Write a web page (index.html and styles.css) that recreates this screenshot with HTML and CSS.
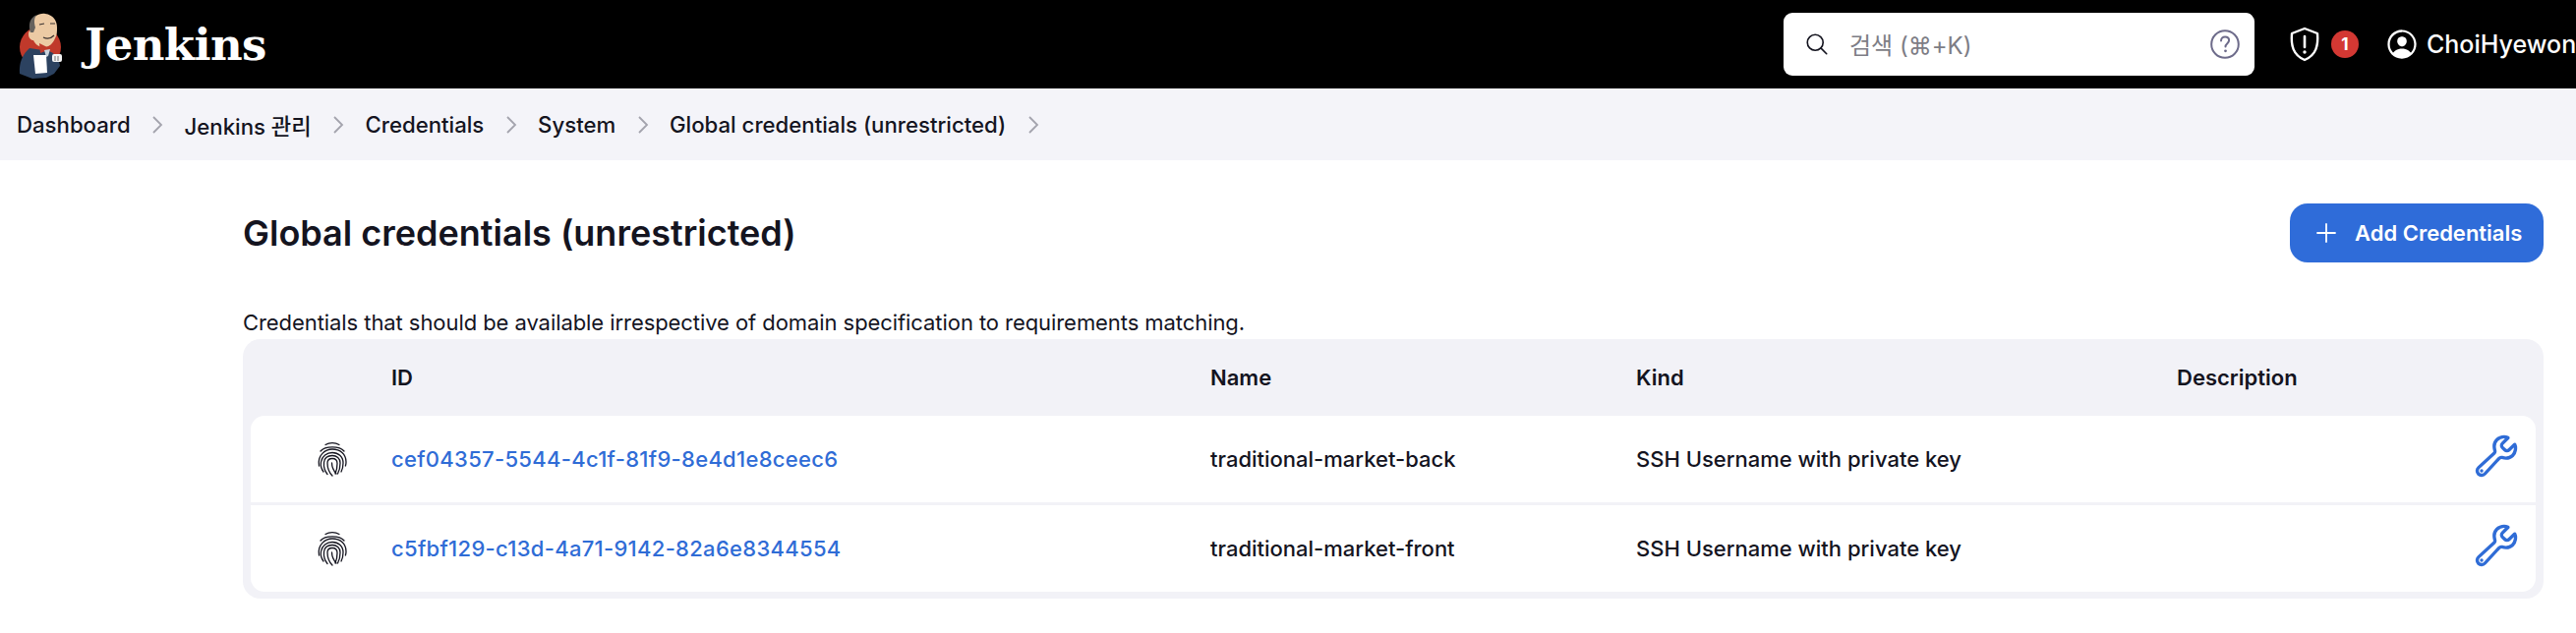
FILE: index.html
```html
<!DOCTYPE html>
<html lang="ko">
<head>
  <meta charset="UTF-8" />
  <title>Global credentials (unrestricted) - Jenkins</title>
  <link rel="stylesheet" href="styles.css">
</head>
<body>
  <header class="page-header">
    <a class="brand">
      <svg class="brand-logo" viewBox="0 0 70 80">
        <circle cx="31" cy="43" r="21" fill="#c0392b"/>
        <path d="M10 70c-1-11 3-20 10-26l20 3c7 3 10 8 11 15l-6 8-8 4-14 1z" fill="#2c4260"/>
        <path d="M21 19c2-7 9-11 15-10 8 1 12 7 12 14 0 4 0 8-2 11-2 5-6 9-11 9-6 0-9-3-11-7-2 0-5-2-5-6 0-3 1-4 2-4z" fill="#eccaa4"/>
        <path d="M21 28c-2-6-2-14 6-18-3 5-2 9-1 13l-2 5z" fill="#66625e"/>
        <path d="M30 20l5-1M41 19l5 0M34 33c4 2 8 1 11-2" stroke="#3a3230" stroke-width="1.200" fill="none"/>
        <path d="M30 39l8 4 8-4 1 6-8 1-8 3z" fill="#c0392b"/>
        <path d="M35 46l6-1-2 7-2 1z" fill="#c9d3dc"/>
        <path d="M24 51l13 0 1 18-12 1z" fill="#fff"/>
        <rect x="43" y="50" width="10" height="8" rx="2" fill="#f4f4f4"/>
        <path d="M46 52v5M49 52v5" stroke="#555" stroke-width=".8"/>
      </svg>
      <span class="brand-name">Jenkins</span>
    </a>
    <div class="search-box">
      <svg class="search-icon" viewBox="0 0 512 512"><path d="M221.090 64a157.090 157.090 0 10157.090 157.090A157.100 157.100 0 00221.090 64z" fill="none" stroke="#14141f" stroke-width="32" stroke-miterlimit="10"/><path fill="none" stroke="#14141f" stroke-linecap="round" stroke-miterlimit="10" stroke-width="32" d="M338.290 338.290L448 448"/></svg>
      <span class="search-hint">검색 (⌘+K)</span>
      <svg class="help-icon" viewBox="0 0 30 30"><circle cx="15" cy="15" r="13.800" fill="none" stroke="#6d6b8a" stroke-width="2"/><path d="M11 11.500c0-2.500 1.900-4 4.100-4 2.300 0 4 1.500 4 3.600 0 3-3.600 3.200-3.600 6.400" fill="none" stroke="#6d6b8a" stroke-width="2" stroke-linecap="round"/><circle cx="15.500" cy="21.800" r="1.400" fill="#6d6b8a"/></svg>
    </div>
    <div class="header-actions">
      <a class="monitor">
        <svg class="shield-icon" viewBox="0 0 32 36"><path d="M16 2l13 5c1 12-1 22-13 27C4 29 2 19 3 7z" fill="none" stroke="#fff" stroke-width="2.400" stroke-linejoin="round"/><path d="M16 10v11" stroke="#fff" stroke-width="2.600" stroke-linecap="round"/><circle cx="16" cy="26" r="1.700" fill="#fff"/></svg>
        <span class="badge">1</span>
      </a>
      <a class="user">
        <svg class="user-icon" viewBox="0 0 512 512"><path fill="#fff" d="M258.900 48C141.920 46.420 46.420 141.920 48 258.900c1.560 112.190 92.930 203.560 205.120 205.120 117 1.600 212.480-93.900 210.880-210.880C462.440 140.910 371.070 49.540 258.900 48zm126.420 327.250a4 4 0 01-6.140-.32 124.270 124.270 0 00-32.350-29.590C321.370 329 289.110 320 256 320s-65.370 9-90.830 25.340a124.240 124.240 0 00-32.350 29.580 4 4 0 01-6.140.32A175.320 175.320 0 0180 259c-1.630-97.310 78.220-178.760 175.570-179S432 158.810 432 256a175.320 175.320 0 01-46.680 119.250z"/><path fill="#fff" d="M256 144c-19.720 0-37.550 7.390-50.220 20.820s-19 32-17.570 51.930C191.110 256 221.520 288 256 288s64.830-32 67.790-71.240c1.480-19.740-4.800-38.140-17.680-51.820C293.390 151.440 275.590 144 256 144z"/></svg>
        <span class="user-name">ChoiHyewon</span>
      </a>
    </div>
  </header>

  <nav class="breadcrumbs">
    <a>Dashboard</a>
    <svg class="chevron" viewBox="0 0 12 20"><path d="M2 2l8 8-8 8"/></svg>
    <a>Jenkins 관리</a>
    <svg class="chevron" viewBox="0 0 12 20"><path d="M2 2l8 8-8 8"/></svg>
    <a>Credentials</a>
    <svg class="chevron" viewBox="0 0 12 20"><path d="M2 2l8 8-8 8"/></svg>
    <a>System</a>
    <svg class="chevron" viewBox="0 0 12 20"><path d="M2 2l8 8-8 8"/></svg>
    <a>Global credentials (unrestricted)</a>
    <svg class="chevron" viewBox="0 0 12 20"><path d="M2 2l8 8-8 8"/></svg>
  </nav>

  <main class="content">
    <div class="title-row">
      <h1>Global credentials (unrestricted)</h1>
      <button class="add-button">
        <svg class="plus-icon" viewBox="0 0 20 20"><path d="M10 1v18M1 10h18"/></svg>
        Add Credentials
      </button>
    </div>
    <p class="description">Credentials that should be available irrespective of domain specification to requirements matching.</p>

    <div class="table-wrap">
      <table class="cred-table">
        <thead>
          <tr>
            <th class="col-icon"></th>
            <th class="col-id">ID</th>
            <th class="col-name">Name</th>
            <th class="col-kind">Kind</th>
            <th>Description</th>
            <th class="col-action"></th>
          </tr>
        </thead>
        <tbody>
          <tr>
            <td class="icon-cell">
              <svg class="print-icon" viewBox="0 0 32 36"><use href="#fingerprint"/></svg>
            </td>
            <td><a class="cred-link">cef04357-5544-4c1f-81f9-8e4d1e8ceec6</a></td>
            <td>traditional-market-back</td>
            <td>SSH Username with private key</td>
            <td></td>
            <td class="action-cell">
              <svg class="wrench-icon" viewBox="0 0 512 512"><use href="#wrench"/></svg>
            </td>
          </tr>
          <tr>
            <td class="icon-cell">
              <svg class="print-icon" viewBox="0 0 32 36"><use href="#fingerprint"/></svg>
            </td>
            <td><a class="cred-link">c5fbf129-c13d-4a71-9142-82a6e8344554</a></td>
            <td>traditional-market-front</td>
            <td>SSH Username with private key</td>
            <td></td>
            <td class="action-cell">
              <svg class="wrench-icon" viewBox="0 0 512 512"><use href="#wrench"/></svg>
            </td>
          </tr>
        </tbody>
      </table>
    </div>
  </main>

  <svg class="icon-defs" width="0" height="0">
    <symbol id="fingerprint" viewBox="0 0 32 36">
      <g fill="none" stroke="#14141f" stroke-width="1.300" stroke-linecap="round">
        <path d="M9 3.500C13 1 19 1 23 3.500"/>
        <path d="M4 10C8.500 4.500 23.500 4.500 28 10"/>
        <path d="M2.500 25C.5 14 9 8 16 8c8 0 14 5 14 13 0 1.500-.2 3-.6 4"/>
        <path d="M7 31C4 27 4 24 4.500 21c1-6 6-9.500 11.500-9.500 6 0 11 4 11 10.500 0 3-.5 6-2 9"/>
        <path d="M11 33.500c-2.500-3-4-7-3.500-12 .5-4.500 4-7 8.500-7s8 3 8 7.500c0 4-.8 8-2.500 11"/>
        <path d="M16 35c-3-3-5-8-5-13 0-3 2-4.500 5-4.500s5 2 5 5c0 3.500-.5 7-2 10.500"/>
        <path d="M15.500 22c0 4 2 8 4.500 11"/>
      </g>
    </symbol>
    <symbol id="wrench" viewBox="0 0 512 512">
      <path d="M393.870 190a32.100 32.100 0 01-45.250 0l-26.570-26.570a32.090 32.090 0 010-45.260L382.190 58a1 1 0 00-.3-1.640c-38.820-16.640-89.150-8.160-121.110 23.570-30.580 30.350-32.320 76-21.120 115.840a31.930 31.930 0 01-9.060 32.080L64 380a48.170 48.170 0 1068 68l153.860-167a31.930 31.930 0 0131.600-9.130c39.540 10.590 84.540 8.600 114.720-21.190 32.490-32 39.500-88.560 23.750-120.930a1 1 0 00-1.600-.26z" fill="none" stroke="#2f6cd6" stroke-width="36" stroke-miterlimit="10" stroke-linecap="round"/>
      <circle cx="96" cy="416" r="18" fill="#2f6cd6"/>
    </symbol>
  </svg>
</body>
</html>
```

FILE: styles.css
```css
html, body {
  margin: 0;
  padding: 0;
  overflow: hidden;
}
body {
  font-family: 'Inter', 'Noto Sans CJK KR', sans-serif;
  color: #14141f;
  background: #fff;
  font-size: 22px;
}
a {
  color: inherit;
  text-decoration: none;
}

/* header */
.page-header {
  height: 90px;
  background: #000;
  color: #fff;
  display: flex;
  align-items: center;
  padding-left: 10px;
}
.brand {
  display: flex;
  align-items: center;
}
.brand-logo {
  width: 70px;
  height: 80px;
}
.brand-name {
  margin-left: 6px;
  font-family: 'DejaVu Serif', serif;
  font-weight: 700;
  font-size: 45px;
  line-height: 1;
  letter-spacing: -0.6px;
}
.search-box {
  margin-left: auto;
  width: 479px;
  height: 64px;
  box-sizing: border-box;
  background: #fff;
  border-radius: 9px;
  display: flex;
  align-items: center;
  padding: 0 15px 0 21px;
}
.search-icon {
  width: 26px;
  height: 26px;
}
.search-hint {
  margin-left: 20px;
  margin-top: -2px;
  color: #7d7d85;
  font-size: 24px;
}
.help-icon {
  width: 30px;
  height: 30px;
  margin-left: auto;
}
.header-actions {
  width: 327px;
  display: flex;
  align-items: center;
  flex-shrink: 0;
  overflow: hidden;
}
.monitor {
  display: flex;
  align-items: center;
  margin-left: 35px;
}
.shield-icon {
  width: 32px;
  height: 36px;
}
.badge {
  width: 28px;
  height: 28px;
  border-radius: 50%;
  background: #d33833;
  color: #fff;
  font-size: 17px;
  font-weight: 700;
  display: flex;
  align-items: center;
  justify-content: center;
  margin-left: 11px;
}
.user {
  display: flex;
  align-items: center;
  margin-left: 26px;
}
.user-icon {
  width: 36px;
  height: 36px;
}
.user-name {
  margin-left: 7px;
  font-size: 25px;
  font-weight: 500;
  white-space: nowrap;
}

/* breadcrumb bar */
.breadcrumbs {
  height: 73px;
  background: #f4f4f9;
  display: flex;
  align-items: center;
  padding-left: 17px;
  font-size: 22.2px;
  font-weight: 500;
}
.chevron {
  width: 12px;
  height: 20px;
  margin: 0 21.4px;
  fill: none;
  stroke: #a3a3ad;
  stroke-width: 1.800;
}

/* main */
.content {
  padding: 0 33px 0 247px;
}
.title-row {
  height: 148px;
  display: flex;
  align-items: center;
  justify-content: space-between;
}
h1 {
  margin: 0;
  font-size: 36px;
  font-weight: 600;
}
.add-button {
  width: 258px;
  height: 60px;
  border: none;
  border-radius: 18px;
  background: #2f6cd9;
  color: #fff;
  font-family: inherit;
  font-size: 22px;
  font-weight: 600;
  display: flex;
  align-items: center;
  padding: 0 0 0 27px;
}
.plus-icon {
  width: 20px;
  height: 20px;
  margin-right: 19px;
  fill: none;
  stroke: #fff;
  stroke-width: 1.800;
  stroke-linecap: round;
}
.description {
  margin: 3px 0 0;
  line-height: 28px;
  font-size: 22px;
  letter-spacing: -0.07px;
}

/* table */
.table-wrap {
  margin-top: 3px;
  background: #f2f2f7;
  border-radius: 18px;
  padding: 0 8px 7px;
}
.cred-table {
  width: 100%;
  border-collapse: separate;
  border-spacing: 0;
  table-layout: fixed;
}
.cred-table th {
  height: 78px;
  padding: 0;
  text-align: left;
  font-weight: 600;
  font-size: 22px;
}
.col-icon { width: 143px; }
.col-id { width: 833px; }
.col-name { width: 433px; }
.col-kind { width: 550px; }
.col-action { width: 80px; }
.cred-table td {
  height: 88px;
  padding: 0;
  background: #fff;
  font-weight: 500;
  font-size: 22px;
}
.cred-table tbody tr + tr td {
  border-top: 3px solid #f2f2f7;
}
.cred-table tbody tr:first-child td:first-child { border-top-left-radius: 14px; }
.cred-table tbody tr:first-child td:last-child { border-top-right-radius: 14px; }
.cred-table tbody tr:last-child td:first-child { border-bottom-left-radius: 14px; }
.cred-table tbody tr:last-child td:last-child { border-bottom-right-radius: 14px; }
.icon-cell {
  text-align: center;
  padding-left: 22px !important;
}
.print-icon {
  width: 32px;
  height: 36px;
  display: block;
  margin: 0 auto;
}
.cred-link {
  color: #2f6cd6;
  font-weight: 500;
  letter-spacing: 0.3px;
}
.action-cell {
  text-align: right;
}
.wrench-icon {
  width: 48px;
  height: 48px;
  display: block;
  margin: -6px 16px 0 auto;
}
.icon-defs {
  position: absolute;
}
```
